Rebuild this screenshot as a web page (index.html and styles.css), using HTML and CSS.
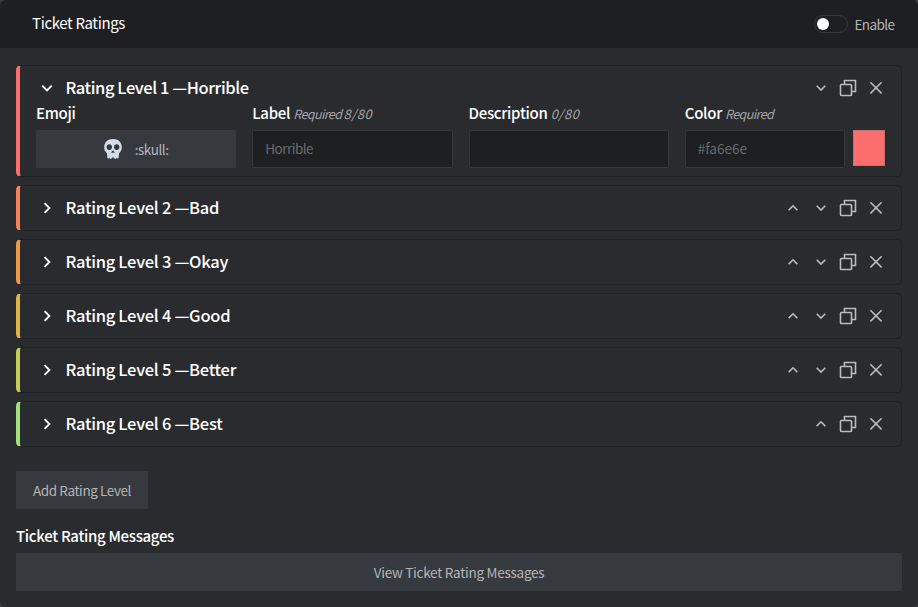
FILE: index.html
```html
<!DOCTYPE html>
<html lang="en">
<head>
<meta charset="utf-8">
<title>Ticket Ratings</title>
<link rel="stylesheet" href="styles.css">
</head>
<body>
<svg class="defs" width="0" height="0">
  <symbol id="up" viewBox="0 0 18 18"><path d="M4.700 11.100 9 6.800l4.300 4.300"/></symbol>
  <symbol id="down" viewBox="0 0 18 18"><path d="M4.700 6.800 9 11.100 13.300 6.800"/></symbol>
  <symbol id="copy" viewBox="0 0 18 18"><rect x="1.500" y="5.500" width="11" height="11" rx=".7"/><path d="M5.500 5.500v-4h11v11h-4"/></symbol>
  <symbol id="close" viewBox="0 0 18 18"><path d="m3.400 3.200 11.200 11.200M14.600 3.200 3.400 14.400"/></symbol>
  <symbol id="open" viewBox="0 0 18 18"><path d="M4.200 6.600 9 11.400l4.800-4.800"/></symbol>
  <symbol id="shut" viewBox="0 0 18 18"><path d="m6.600 4.200 4.800 4.800-4.800 4.800"/></symbol>
</svg>
<div class="panel">
  <header class="panel-head">
    <span class="panel-title">Ticket Ratings</span>
    <label class="toggle"><span class="track"><span class="knob"></span></span><span class="toggle-text">Enable</span></label>
  </header>
  <main class="content">
    <div class="levels">
      <section class="card horrible expanded">
        <div class="card-head">
          <svg class="caret"><use href="#open"/></svg><h2>Rating Level 1 —Horrible</h2>
          <div class="actions"><svg><use href="#down"/></svg><svg><use href="#copy"/></svg><svg><use href="#close"/></svg></div>
        </div>
        <div class="fields">
          <div class="field">
            <div class="label">Emoji</div>
            <div class="button emoji">
              <svg class="skull" viewBox="0 0 18 20"><path fill-rule="evenodd" d="M9 0C3.600 0 .2 3.500.2 8.300c0 2.600.9 4 2 5.200.7.7.8 1.200.9 2.300l.2 2.500c0 .8.5 1.200 1.100 1.200.7 0 1-.5 1-1.200 0 1 .5 1.700 1.300 1.700s1.300-.6 1.300-1.400h2c0 .8.500 1.400 1.300 1.400s1.300-.7 1.300-1.700c0 .7.300 1.200 1 1.200.6 0 1.100-.4 1.100-1.200l.2-2.500c.1-1.100.2-1.600.9-2.300 1.100-1.200 2-2.600 2-5.200C17.800 3.500 14.400 0 9 0zM5.300 5.200a2.700 2.900 0 1 0 0 5.800 2.700 2.900 0 0 0 0-5.800zm7.400 0a2.700 2.900 0 1 0 0 5.800 2.700 2.900 0 0 0 0-5.800zM9 11.300l-1.600 2c-.3.700.900.800 1.600.200.700.6 1.900.500 1.600-.2z"/></svg>
              <span>:skull:</span>
            </div>
          </div>
          <div class="field"><div class="label">Label <em>Required <span class="count">8/80</span></em></div><div class="input">Horrible</div></div>
          <div class="field"><div class="label">Description <em><span class="count">0/80</span></em></div><div class="input"></div></div>
          <div class="field"><div class="label">Color <em>Required</em></div><div class="color-row"><div class="input hex">#fa6e6e</div><span class="swatch"></span></div></div>
        </div>
      </section>
      <section class="card bad"><div class="card-head"><svg class="caret"><use href="#shut"/></svg><h2>Rating Level 2 —Bad</h2><div class="actions"><svg><use href="#up"/></svg><svg><use href="#down"/></svg><svg><use href="#copy"/></svg><svg><use href="#close"/></svg></div></div></section>
      <section class="card okay"><div class="card-head"><svg class="caret"><use href="#shut"/></svg><h2>Rating Level 3 —Okay</h2><div class="actions"><svg><use href="#up"/></svg><svg><use href="#down"/></svg><svg><use href="#copy"/></svg><svg><use href="#close"/></svg></div></div></section>
      <section class="card good"><div class="card-head"><svg class="caret"><use href="#shut"/></svg><h2>Rating Level 4 —Good</h2><div class="actions"><svg><use href="#up"/></svg><svg><use href="#down"/></svg><svg><use href="#copy"/></svg><svg><use href="#close"/></svg></div></div></section>
      <section class="card better"><div class="card-head"><svg class="caret"><use href="#shut"/></svg><h2>Rating Level 5 —Better</h2><div class="actions"><svg><use href="#up"/></svg><svg><use href="#down"/></svg><svg><use href="#copy"/></svg><svg><use href="#close"/></svg></div></div></section>
      <section class="card best"><div class="card-head"><svg class="caret"><use href="#shut"/></svg><h2>Rating Level 6 —Best</h2><div class="actions"><svg><use href="#up"/></svg><svg><use href="#copy"/></svg><svg><use href="#close"/></svg></div></div></section>
    </div>
    <div class="button add">Add Rating Level</div>
    <h3>Ticket Rating Messages</h3>
    <div class="button view">View Ticket Rating Messages</div>
  </main>
</div>
</body>
</html>
```
FILE: styles.css
```css
* { box-sizing: border-box; }
body {
  margin: 0;
  background: #3a3b3e;
  color: #fff;
  font-family: "Noto Sans CJK SC", "Noto Sans", sans-serif;
  font-size: 13.5px;
}
.defs { position: absolute; }
.panel { height: 607px; border-radius: 6px; overflow: hidden; background: #2a2b2e; }
.panel-head {
  height: 48px;
  padding: 0 24px 0 32px;
  display: flex;
  align-items: center;
  justify-content: space-between;
  background: #1e1f22;
}
.panel-title { font-size: 15px; line-height: 20px; letter-spacing: -0.36px; padding-bottom: 2px; }
.toggle { display: flex; align-items: center; gap: 7px; color: #b5b6b8; }
.toggle-text { width: 39.500px; letter-spacing: -0.6px; white-space: nowrap; }
.track {
  width: 34px;
  height: 18px;
  padding: 2px;
  border: 1px solid #35373b;
  border-radius: 9px;
}
.knob { display: block; width: 12px; height: 12px; border-radius: 50%; background: #fff; }
.content { padding: 17px 16px 0; }
.levels { display: flex; flex-direction: column; gap: 8px; }
.card {
  height: 46px;
  border: 1px solid #212225;
  border-left-width: 4px;
  border-radius: 5px;
}
.expanded { height: 112px; }
.horrible { border-left-color: #fa6e6e; }
.bad { border-left-color: #f5835a; }
.okay { border-left-color: #eb9c48; }
.good { border-left-color: #dcb44a; }
.better { border-left-color: #c5cc58; }
.best { border-left-color: #a0e07c; }
.card-head { height: 44px; padding: 0 16.500px 0 18px; display: flex; align-items: center; }
svg { fill: none; stroke: #b9bbbe; stroke-width: 1.6; width: 18px; height: 18px; flex: none; }
.caret { stroke: #fff; stroke-width: 1.9; }
h2 {
  margin: 0 0 0 9.500px;
  padding-bottom: 2px;
  font-size: 16.500px;
  line-height: 22px;
  font-weight: 500;
  letter-spacing: -0.27px;
}
.expanded h2 { letter-spacing: -0.42px; }
.actions { margin-left: auto; display: flex; gap: 9.400px; }
.fields {
  margin-top: -7px;
  padding: 0 16px;
  display: grid;
  grid-template-columns: repeat(4, 1fr);
  gap: 16px;
}
.label {
  height: 20px;
  margin-bottom: 7px;
  line-height: 20px;
  font-size: 15px;
  font-weight: 500;
  letter-spacing: -0.3px;
  white-space: nowrap;
}
.label em { font-size: 12.500px; font-weight: 400; letter-spacing: -0.6px; color: #a3a5a8; }
.label .count { font-size: 13px; letter-spacing: 0.5px; }
.input {
  height: 38px;
  flex: 1;
  padding: 0 12px;
  border: 1px solid #35373b;
  border-radius: 2px;
  background: #1e1f22;
  color: #696b6f;
  line-height: 35px;
  letter-spacing: -0.5px;
}
.hex { letter-spacing: 0; }
.color-row { display: flex; gap: 8px; }
.swatch { width: 32px; height: 36px; border: 1px solid #c07073; background: #fa6e6e; }
.button {
  height: 38px;
  display: flex;
  align-items: center;
  justify-content: center;
  border-radius: 1px;
  background: #36393e;
  color: #b5b6b8;
  line-height: 20px;
  letter-spacing: -0.42px;
}
.emoji { gap: 13px; }
.skull { width: 18px; height: 20px; fill: #d5dbe7; stroke: none; }
.add { width: 132px; margin-top: 24px; }
.view { letter-spacing: -0.26px; }
h3 { margin: 17px 0 7px; line-height: 20px; font-size: 15px; font-weight: 500; letter-spacing: -0.32px; }
```
